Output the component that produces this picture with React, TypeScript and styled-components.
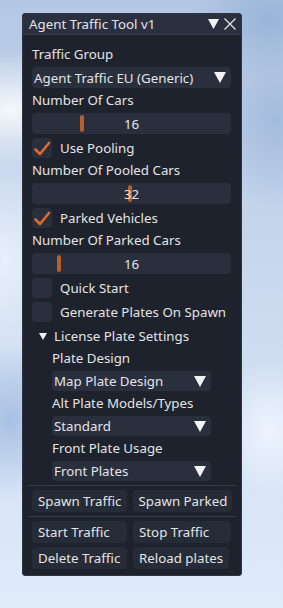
import React, {FC} from "react";
import styled, {createGlobalStyle} from "styled-components";

const GlobalStyle = createGlobalStyle`
html, body {
  margin: 0;
  padding: 0;
}
body {
  font-family: "Noto Sans", "Open Sans", sans-serif;
  font-size: 13.3px;
  color: #e4e4e6;
}
`;

const Page = styled.div`
width: 283px;
height: 608px;
box-sizing: border-box;
padding: 13px 0 0 22px;
overflow: hidden;
background:
  radial-gradient(ellipse 90px 60px at 10px 110px, rgba(255,255,255,0.85), rgba(255,255,255,0) 100%),
  radial-gradient(ellipse 70px 120px at 5px 260px, rgba(240,246,255,0.8), rgba(255,255,255,0) 100%),
  radial-gradient(ellipse 60px 90px at 275px 120px, rgba(160,185,220,0.9), rgba(160,185,220,0) 100%),
  radial-gradient(ellipse 80px 60px at 270px 20px, rgba(150,178,215,0.9), rgba(150,178,215,0) 100%),
  radial-gradient(ellipse 60px 80px at 10px 420px, rgba(150,180,220,0.7), rgba(150,180,220,0) 100%),
  radial-gradient(ellipse 50px 70px at 270px 430px, rgba(240,246,255,0.9), rgba(240,246,255,0) 100%),
  linear-gradient(180deg, #b4c8e4 0%, #c6d6ec 40%, #d6e3f5 75%, #e0ebfa 100%);
`;

const Window = styled.div`
width: 220px;
height: 563px;
box-sizing: border-box;
background: #1e222c;
border: 1px solid #2e3442;
border-radius: 3px;
display: flex;
flex-direction: column;
overflow: hidden;
`;

const TitleBar = styled.div`
height: 20px;
flex: none;
display: flex;
align-items: center;
padding: 0 4px 0 6px;
background: #2a3040;
border-bottom: 1px solid #343b4b;
`;

const Title = styled.div`
flex: 1;
white-space: nowrap;
line-height: 20px;
`;

const TitleIcons = styled.div`
display: flex;
align-items: center;
gap: 4px;
`;

const Body = styled.div`
flex: 1;
display: flex;
flex-direction: column;
gap: 4px;
padding: 11px 9px 0 9px;
`;

const Label = styled.div`
height: 17px;
line-height: 17px;
white-space: nowrap;
`;

const Frame = styled.div<{ $w?: number; $h?: number }>`
height: ${p => p.$h ?? 21}px;
width: ${p => p.$w ?? 199}px;
box-sizing: border-box;
background: #2a2f3e;
border-radius: 4px;
position: relative;
display: flex;
align-items: center;
white-space: nowrap;
`;

const ComboText = styled.div`
flex: 1;
padding-left: 2px;
`;

const ComboArrow = styled.div`
width: 22px;
display: flex;
justify-content: center;
align-items: center;
`;

const SliderValue = styled.div`
flex: 1;
text-align: center;
position: relative;
z-index: 1;
`;

const Grab = styled.div`
position: absolute;
top: 2px;
bottom: 2px;
width: 4px;
border-radius: 2px;
background: #b85e28;
`;

const CheckRow = styled.div`
display: flex;
align-items: center;
gap: 8px;
height: 20px;
white-space: nowrap;
`;

const Box = styled.div`
width: 20px;
height: 20px;
border-radius: 4px;
background: #2a2f3e;
display: flex;
align-items: center;
justify-content: center;
`;

const TreeNode = styled.div`
height: 20px;
display: flex;
align-items: center;
gap: 7px;
padding-left: 7px;
white-space: nowrap;
`;

const Indent = styled.div`
display: flex;
flex-direction: column;
gap: 4px;
padding-left: 20px;
`;

const Separator = styled.div`
height: 1px;
background: #363c4b;
margin: 0 -4px;
`;

const ButtonRow = styled.div`
display: flex;
gap: 6px;
`;

const Button = styled.div<{ $w: number }>`
width: ${p => p.$w}px;
height: 22px;
box-sizing: border-box;
padding-left: 6px;
line-height: 22px;
border-radius: 4px;
background: #262b38;
white-space: nowrap;
`;

const DownTriangle: FC<{ w: number; h: number }> = ({w, h}) => <svg width={w} height={h} viewBox={`0 0 ${w} ${h}`}>
  <polygon points={`0,0 ${w},0 ${w / 2},${h}`} fill="#f2f2f2"/>
</svg>;

const Close: FC = () => <svg width="14" height="12" viewBox="0 0 14 12">
  <path d="M1.5 0.5 L12.5 11.5 M12.5 0.5 L1.5 11.5" stroke="#e6e6e6" strokeWidth="1.2" fill="none"/>
</svg>;

const Check: FC = () => <svg width="20" height="20" viewBox="0 0 20 20">
  <polyline points="3.5,11.5 8,16 17,5" stroke="#e06b2a" strokeWidth="2.6" fill="none" strokeLinecap="round" strokeLinejoin="round"/>
</svg>;

const Combo: FC<{ value: string; w?: number; h?: number }> = ({value, w, h}) => <Frame $w={w} $h={h}>
  <ComboText>{value}</ComboText>
  <ComboArrow><DownTriangle w={12} h={11}/></ComboArrow>
</Frame>;

const Slider: FC<{ value: number; pos: number }> = ({value, pos}) => <Frame>
  <Grab style={{left: pos}}/>
  <SliderValue>{value}</SliderValue>
</Frame>;

const Checkbox: FC<{ label: string; checked?: boolean }> = ({label, checked}) => <CheckRow>
  <Box>{checked && <Check/>}</Box>
  {label}
</CheckRow>;

const App: FC = () => <Page>
  <GlobalStyle/>
  <Window>
    <TitleBar>
      <Title>Agent Traffic Tool v1</Title>
      <TitleIcons>
        <DownTriangle w={11} h={10}/>
        <Close/>
      </TitleIcons>
    </TitleBar>
    <Body>
      <Label>Traffic Group</Label>
      <Combo value="Agent Traffic EU (Generic)"/>
      <Label>Number Of Cars</Label>
      <Slider value={16} pos={48}/>
      <Checkbox label="Use Pooling" checked/>
      <Label>Number Of Pooled Cars</Label>
      <Slider value={32} pos={96}/>
      <Checkbox label="Parked Vehicles" checked/>
      <Label>Number Of Parked Cars</Label>
      <Slider value={16} pos={25}/>
      <Checkbox label="Quick Start"/>
      <Checkbox label="Generate Plates On Spawn"/>
      <TreeNode>
        <DownTriangle w={8} h={7}/>
        License Plate Settings
      </TreeNode>
      <Indent>
        <Label>Plate Design</Label>
        <Combo value="Map Plate Design" w={159} h={20}/>
        <Label>Alt Plate Models/Types</Label>
        <Combo value="Standard" w={159} h={20}/>
        <Label>Front Plate Usage</Label>
        <Combo value="Front Plates" w={159} h={20}/>
      </Indent>
      <Separator/>
      <ButtonRow>
        <Button $w={95}>Spawn Traffic</Button>
        <Button $w={100}>Spawn Parked</Button>
      </ButtonRow>
      <Separator/>
      <ButtonRow>
        <Button $w={95}>Start Traffic</Button>
        <Button $w={98}>Stop Traffic</Button>
      </ButtonRow>
      <ButtonRow>
        <Button $w={95}>Delete Traffic</Button>
        <Button $w={96}>Reload plates</Button>
      </ButtonRow>
    </Body>
  </Window>
</Page>;

export default App;
